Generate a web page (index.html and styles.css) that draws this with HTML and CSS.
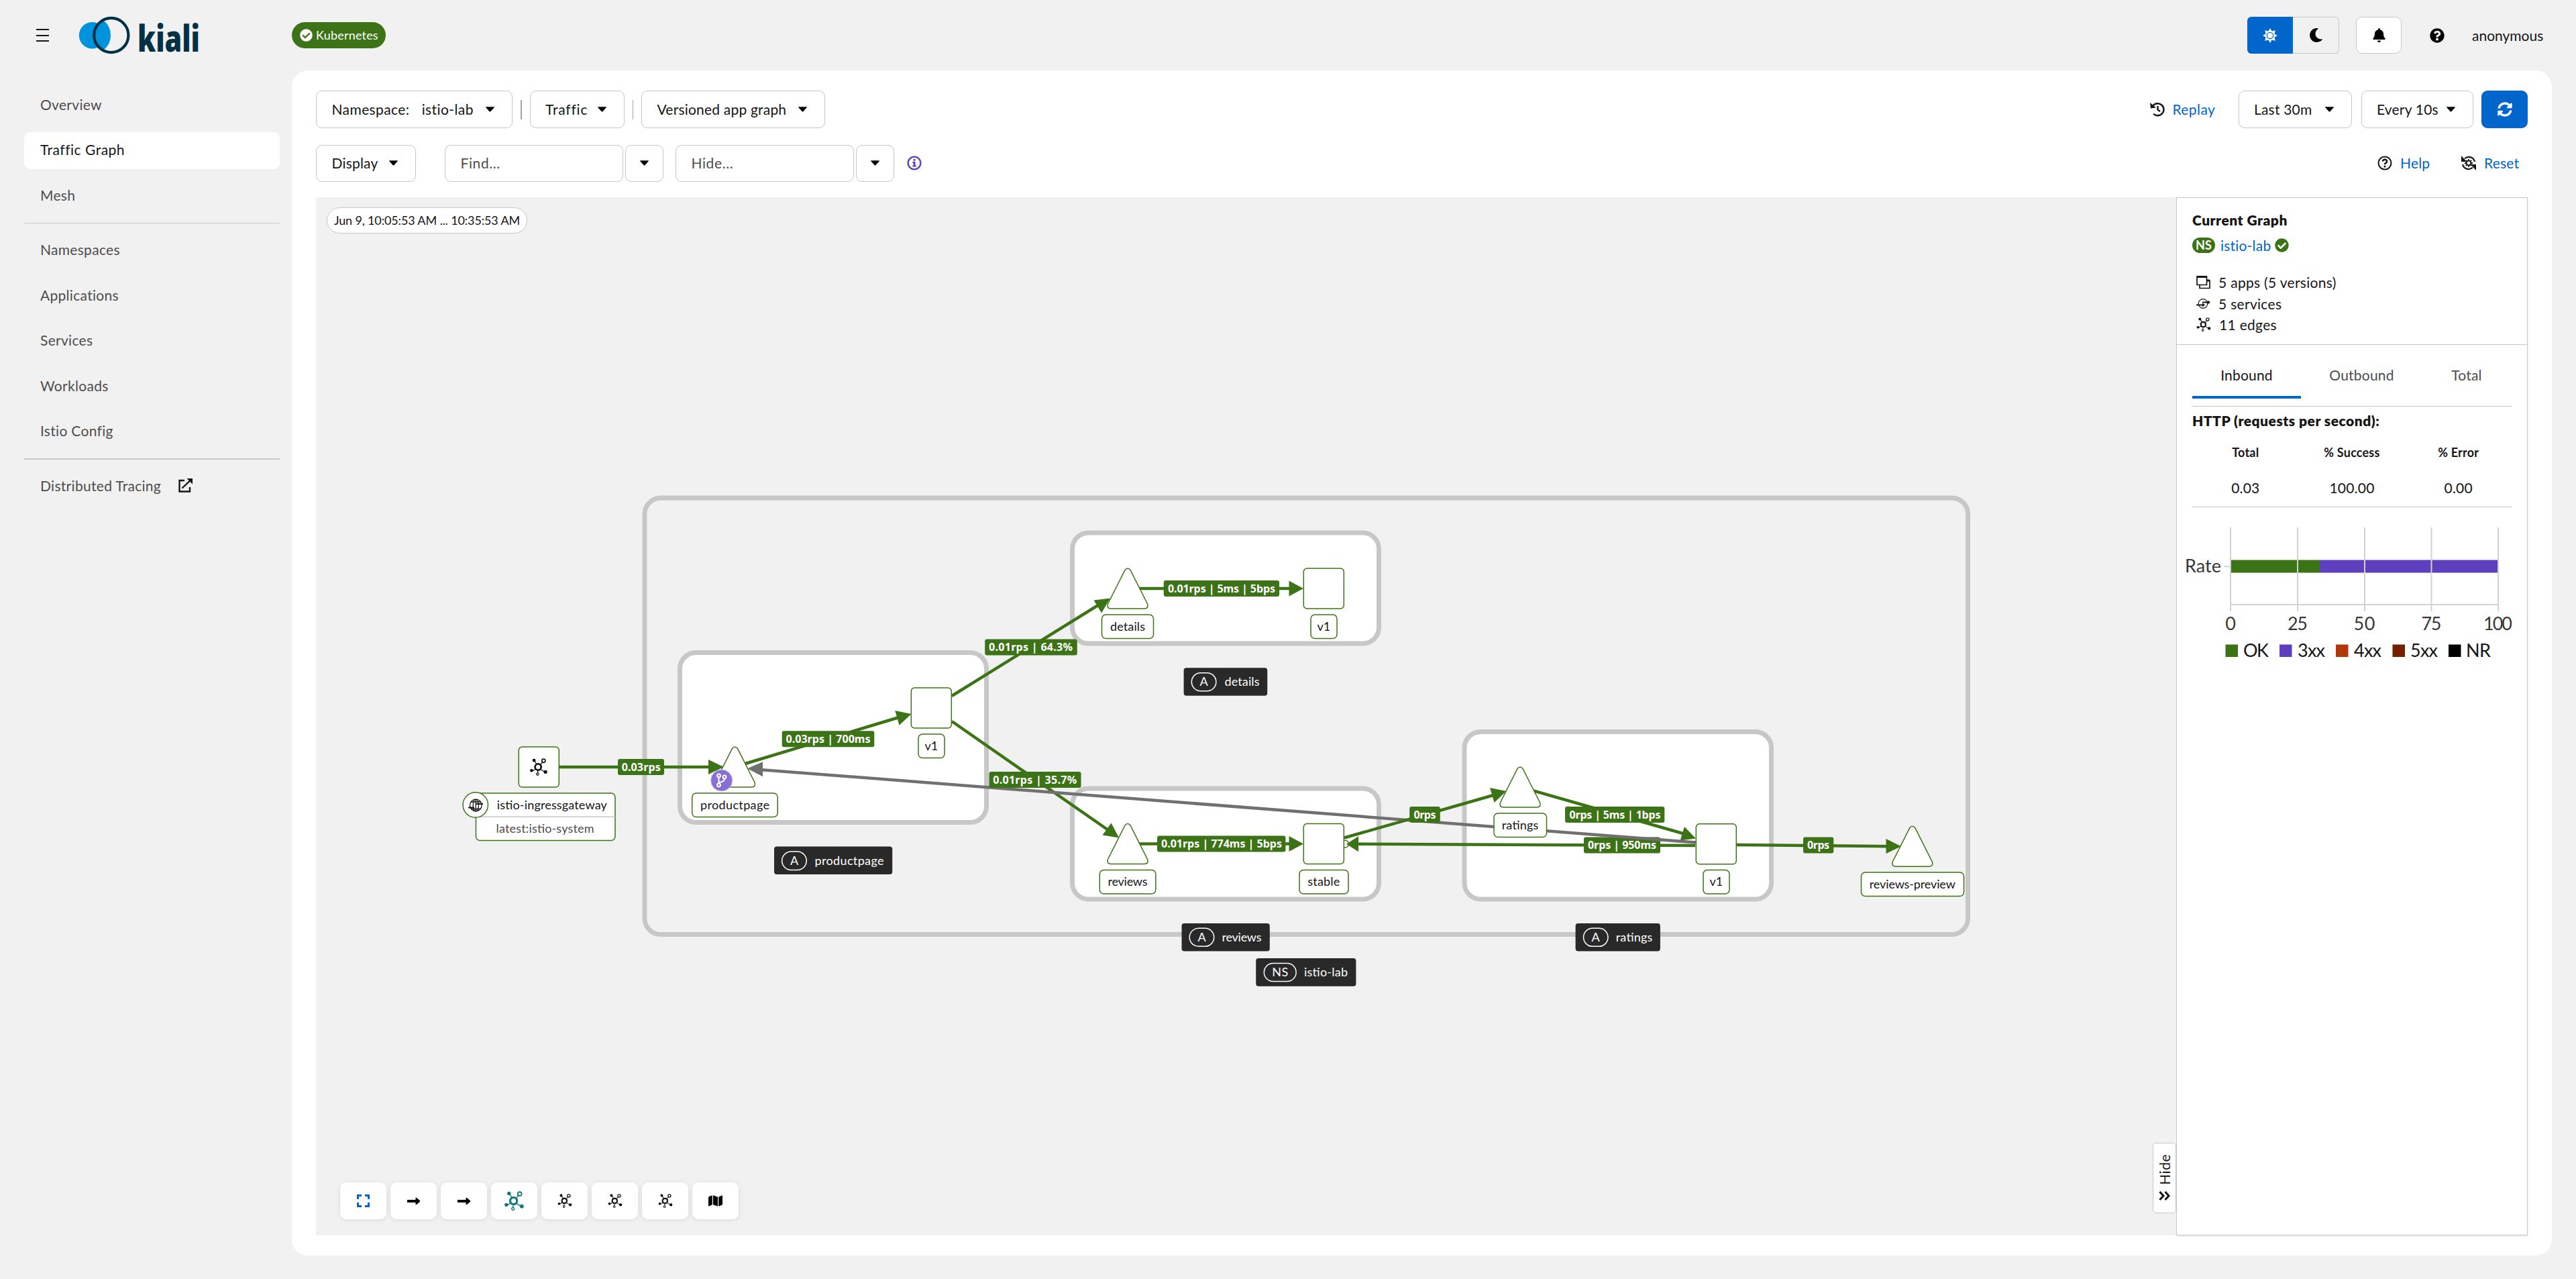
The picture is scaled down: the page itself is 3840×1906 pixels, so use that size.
FILE: index.html
```html
<!DOCTYPE html>
<html lang="en">
<head>
  <meta charset="UTF-8">
  <title>Kiali</title>
  <link rel="stylesheet" href="styles.css">
</head>
<body>
  <!-- shared icons -->
  <svg class="defs" width="0" height="0">
    <symbol id="caret" viewBox="0 0 14 8"><path d="M.6 0h12.8q.9.3.2 1L7.8 7.4q-.8.8-1.6 0L.4 1Q-.3.3.6 0z"/></symbol>
    <symbol id="check" viewBox="0 0 512 512"><path d="M504 256c0 136.967-111.033 248-248 248S8 392.967 8 256 119.033 8 256 8s248 111.033 248 248zM227.314 387.314l184-184c6.248-6.248 6.248-16.379 0-22.627l-22.627-22.627c-6.248-6.249-16.379-6.249-22.628 0L216 308.118l-70.059-70.059c-6.248-6.248-16.379-6.248-22.628 0l-22.627 22.627c-6.248 6.248-6.248 16.379 0 22.627l104 104c6.249 6.249 16.379 6.249 22.628.001z"/></symbol>
    <symbol id="topology" viewBox="0 0 32 32">
      <g stroke="currentColor" stroke-width="1.6" fill="none">
        <path d="M8 4l5 8M24 6l-6 7M5 23l6-4M19 20l8 5M15 21l-1 6"/>
        <circle cx="15" cy="16" r="5.6" stroke-width="3.4"/>
        <circle cx="25" cy="4.6" r="3.2" stroke-width="2"/>
        <circle cx="14" cy="29" r="2.1"/>
      </g>
      <circle cx="7.5" cy="3.8" r="3"/><circle cx="3" cy="22.5" r="2.8"/><circle cx="28.5" cy="25" r="3.2"/>
    </symbol>
  </svg>

  <header class="masthead">
    <div class="menu"><span></span><span></span><span></span></div>
    <svg class="logo" width="190" height="60" viewBox="0 0 190 60">
      <circle cx="21.500" cy="29.700" r="19.700" fill="#0093dd"/>
      <path d="M38 7Q49 16 49 29.500T38 52Q26 44 25 29.500Q26 15 38 7z" fill="#0093dd"/>
      <circle cx="49.800" cy="29.500" r="25.600" fill="none" stroke="#013144" stroke-width="4.200"/>
      <text class="logo-text" x="89" y="54" textLength="93" lengthAdjust="spacingAndGlyphs">kiali</text>
    </svg>
    <div class="cluster"><svg width="19" height="19"><use href="#check"/></svg><span>Kubernetes</span></div>
    <div class="tools">
      <div class="theme">
        <span class="theme-on"><svg width="22" height="22" viewBox="0 0 22 22"><path d="M11 0l2.6 4.600L18.800 3.200l-1.400 5.200L22 11l-4.600 2.600 1.400 5.200-5.200-1.400L11 22l-2.600-4.600-5.200 1.400 1.400-5.200L0 11l4.600-2.600-1.400-5.200 5.200 1.400z"/><circle cx="11" cy="11" r="4.700" fill="#fff" stroke="#06c" stroke-width="1.300"/></svg></span>
        <span class="theme-off"><svg width="21" height="21" viewBox="0 0 512 512"><path d="M283.211 512c78.962 0 151.079-35.925 198.857-94.792 7.068-8.708-.639-21.430-11.562-19.350-124.203 23.654-238.262-71.576-238.262-196.954 0-72.222 38.662-138.635 101.498-174.394 9.686-5.512 7.250-20.197-3.756-22.230A258.156 258.156 0 0 0 283.211 0c-141.309 0-256 114.511-256 256 0 141.309 114.511 256 256 256z"/></svg></span>
      </div>
      <div class="bell"><svg width="19" height="21" viewBox="0 0 448 512"><path d="M224 512c35.320 0 63.970-28.650 63.970-64H160.030c0 35.350 28.650 64 63.970 64zm215.390-149.710c-19.320-20.760-55.470-51.990-55.470-154.290 0-77.700-54.480-139.900-127.940-155.160V32c0-17.670-14.320-32-31.980-32s-31.980 14.330-31.980 32v20.840C118.560 68.100 64.080 130.300 64.080 208c0 102.300-36.150 133.530-55.470 154.290-6 6.450-8.660 14.160-8.610 21.710.110 16.400 12.980 32 32.100 32h383.800c19.120 0 32-15.600 32.100-32 .050-7.550-2.610-15.270-8.610-21.710z"/></svg></div>
      <svg class="help-dot" width="22" height="22" viewBox="0 0 512 512"><path d="M504 256c0 136.997-111.043 248-248 248S8 392.997 8 256C8 119.083 119.043 8 256 8s248 111.083 248 248zM262.655 90c-54.497 0-89.255 22.957-116.549 63.758-3.536 5.286-2.353 12.415 2.715 16.258l34.699 26.310c5.205 3.947 12.621 3.008 16.665-2.122 17.864-22.658 30.113-35.797 57.303-35.797 20.429 0 45.698 13.148 45.698 32.958 0 14.976-12.363 22.667-32.534 33.976C247.128 238.528 216 254.941 216 296v4c0 6.627 5.373 12 12 12h56c6.627 0 12-5.373 12-12v-1.333c0-28.462 83.186-29.647 83.186-106.667 0-58.002-60.165-102-116.531-102zM256 338c-25.365 0-46 20.635-46 46 0 25.364 20.635 46 46 46s46-20.636 46-46c0-25.365-20.635-46-46-46z"/></svg>
      <span class="user">anonymous</span>
    </div>
  </header>

  <div class="page">
    <nav class="sidebar">
      <a>Overview</a>
      <a class="active">Traffic Graph</a>
      <a>Mesh</a>
      <hr>
      <a>Namespaces</a>
      <a>Applications</a>
      <a>Services</a>
      <a>Workloads</a>
      <a>Istio Config</a>
      <hr>
      <a>Distributed Tracing
        <svg width="22" height="22" viewBox="0 0 22 22" fill="none" stroke="#151515" stroke-width="2.400"><path d="M10 3H2.500v16.500H18V13M6.500 14.500L18.500 3"/><path d="M13.500 0H22v8.500z" fill="#151515" stroke="none"/></svg>
      </a>
    </nav>

    <main class="content">
      <div class="toolbar">
        <div class="btn ns"><span>Namespace:</span><span>istio-lab</span><svg class="caret"><use href="#caret"/></svg></div>
        <i class="sep"></i>
        <div class="btn traffic"><span>Traffic</span><svg class="caret"><use href="#caret"/></svg></div>
        <i class="sep"></i>
        <div class="btn versioned"><span>Versioned app graph</span><svg class="caret"><use href="#caret"/></svg></div>
        <div class="right">
          <a class="link replay"><svg width="22" height="22" viewBox="0 0 22 22" fill="none" stroke="#151515" stroke-width="2.400"><path d="M4.500 5.500A9 9 0 1 1 5 17.500M11.500 6v5.500l3.500 2.500"/><path d="M0 1l1 8.500 8-1z" fill="#151515" stroke="none"/></svg>Replay</a>
          <div class="btn last"><span>Last 30m</span><svg class="caret"><use href="#caret"/></svg></div>
          <div class="btn every"><span>Every 10s</span><svg class="caret"><use href="#caret"/></svg></div>
          <div class="refresh"><svg width="22" height="22" viewBox="0 0 512 512"><path d="M370.720 133.280C339.458 104.008 298.888 87.962 255.848 88c-77.458.068-144.328 53.178-162.791 126.850-1.344 5.363-6.122 9.150-11.651 9.150H24.103c-7.498 0-13.194-6.807-11.807-14.176C33.933 94.924 134.813 8 256 8c66.448 0 126.791 26.136 171.315 68.685L463.030 40.970C478.149 25.851 504 36.559 504 57.941V192c0 13.255-10.745 24-24 24H345.941c-21.382 0-32.090-25.851-16.971-40.971l41.750-41.749zM32 296h134.059c21.382 0 32.090 25.851 16.971 40.971l-41.750 41.750c31.262 29.273 71.835 45.319 114.876 45.280 77.418-.070 144.315-53.144 162.787-126.849 1.344-5.363 6.122-9.150 11.651-9.150h57.304c7.498 0 13.194 6.807 11.807 14.176C478.067 417.076 377.187 504 256 504c-66.448 0-126.791-26.136-171.315-68.685L48.970 471.030C33.851 486.149 8 475.441 8 454.059V320c0-13.255 10.745-24 24-24z"/></svg></div>
        </div>
      </div>

      <div class="toolbar second">
        <div class="btn display"><span>Display</span><svg class="caret"><use href="#caret"/></svg></div>
        <div class="btn field find">Find...</div>
        <div class="btn drop"><svg class="caret"><use href="#caret"/></svg></div>
        <div class="btn field hide">Hide...</div>
        <div class="btn drop"><svg class="caret"><use href="#caret"/></svg></div>
        <svg class="info" width="22" height="22" viewBox="0 0 22 22"><circle cx="11" cy="11" r="9.400" fill="none" stroke="#5e40be" stroke-width="2.400"/><path fill="#5e40be" d="M9.500 5h3v2.800h-3zM8.300 9h4.200v5.500h1.300v2H8.300v-2h1.300V11H8.300z"/></svg>
        <div class="right">
          <a class="link help"><svg width="22" height="22" viewBox="0 0 22 22" fill="none" stroke="#151515"><circle cx="11" cy="11" r="9.500" stroke-width="2"/><path stroke-width="2.400" d="M7.600 8.500Q8.500 5.700 11.200 5.800q3 .2 3 2.800 0 1.400-1.700 2.300T11 13.200"/><circle cx="11" cy="16" r="1.600" fill="#151515" stroke="none"/></svg>Help</a>
          <a class="link reset"><svg width="22" height="22" viewBox="0 0 22 22" fill="none" stroke="#151515"><path stroke-width="2.200" d="M5 4.500A9 9 0 0 1 20 9M17 17.500A9 9 0 0 1 2 13"/><circle cx="11" cy="11" r="3.400" stroke-width="2"/><path stroke-width="1.800" d="M11 5v2M11 15v2M5 11h2M15 11h2M6.800 6.800l1.400 1.400M13.800 13.800l1.400 1.400M15.200 6.800l-1.400 1.400M8.200 13.800l-1.400 1.400"/><path d="M0 0v9h8zM22 22v-9h-8z" fill="#151515" stroke="none"/></svg>Reset</a>
        </div>
      </div>

      <div class="workspace">
        <div class="graph">
          <svg class="canvas" width="2773" height="1547" viewBox="471 294 2773 1547">
            <!-- namespace and app boxes -->
            <rect class="box outer" x="961" y="742" width="1972.500" height="650.500" rx="24"/>
            <rect class="box" x="1013.500" y="972.500" width="457" height="253" rx="24"/>
            <rect class="box" x="1598.500" y="794" width="457" height="165" rx="24"/>
            <rect class="box" x="1598.500" y="1175" width="457" height="165" rx="24"/>
            <rect class="box" x="2183" y="1090.500" width="457.500" height="249.500" rx="24"/>

            <!-- edges -->
            <g class="edge">
              <path d="M833 1143H1060"/><path class="tip" d="M1079 1143l-23-11v22z"/>
              <path d="M1111 1138L1340 1069"/><path class="tip" d="M1358.500 1064l-24.300-5 6.300 21.700z"/>
              <path d="M1419 1037L1640 900"/><path class="tip" d="M1655 891.500l-24.500 3 11.500 19z"/>
              <path d="M1419 1075L1652 1237"/><path class="tip" d="M1668 1248.500l-11.500-22-13 18z"/>
              <path d="M1698 877H1925"/><path class="tip" d="M1943 877l-21.500-11.500v23z"/>
              <path d="M1698 1257.500H1925"/><path class="tip" d="M1943 1257.500l-21.500-11.500v23z"/>
              <path d="M2527 1260L2022 1257.700"/>
              <path d="M2286 1178.500L2512 1243"/><path class="tip" d="M2528 1249.500l-17-17.500-6.300 20.500z"/>
              <path d="M2589 1259L2815 1261.200"/><path class="tip" d="M2834 1261.300l-22.500-11.300v22z"/>
            </g>
            <g class="tag"><rect x="2361" y="1247.500" width="114" height="24" rx="3"/><text x="2418" y="1265" textLength="102">0rps | 950ms</text></g>
            <path class="edge-idle" d="M1130 1146.700L2528 1255.500"/>
            <path class="tip-idle" d="M1114 1145.300l23-10v22z"/>
            <g class="edge">
              <path d="M2004 1248.500L2228 1184.500"/><path class="tip" d="M2245.500 1179l-24.500-5 6.500 22z"/>
              <circle class="port" cx="2005" cy="1257.700" r="5.500"/>
              <path class="tip" d="M2007 1257.700l18-11.500v23z"/>
            </g>

            <!-- edge labels -->
            <g class="tag"><rect x="921" y="1131" width="69" height="24" rx="3"/><text x="955.700" y="1148.700" textLength="58">0.03rps</text></g>
            <g class="tag"><rect x="1165.700" y="1089.300" width="137.600" height="24" rx="3"/><text x="1234.500" y="1107" textLength="126">0.03rps | 700ms</text></g>
            <g class="tag"><rect x="1468.200" y="952.500" width="137.500" height="24" rx="3"/><text x="1536.500" y="970.200" textLength="125">0.01rps | 64.3%</text></g>
            <g class="tag"><rect x="1734.700" y="865" width="172.300" height="24" rx="3"/><text x="1821" y="882.700" textLength="160">0.01rps | 5ms | 5bps</text></g>
            <g class="tag"><rect x="1474.500" y="1150" width="137" height="24" rx="3"/><text x="1542.700" y="1167.700" textLength="125">0.01rps | 35.7%</text></g>
            <g class="tag"><rect x="1725" y="1245.500" width="191.400" height="24" rx="3"/><text x="1821" y="1263.200" textLength="180">0.01rps | 774ms | 5bps</text></g>
            <g class="tag"><rect x="2101.200" y="1202" width="45.600" height="24" rx="3"/><text x="2124" y="1219.700" textLength="33">0rps</text></g>
            <g class="tag"><rect x="2333" y="1202" width="148.300" height="24" rx="3"/><text x="2407.500" y="1219.700" textLength="136">0rps | 5ms | 1bps</text></g>
            <g class="tag"><rect x="2688" y="1247.500" width="45.300" height="24" rx="3"/><text x="2710.600" y="1265.200" textLength="33">0rps</text></g>

            <!-- nodes -->
            <g class="node">
              <rect x="773.300" y="1113" width="60" height="60" rx="5"/>
              <rect x="1358.300" y="1025" width="60" height="60" rx="5"/>
              <rect x="1943.300" y="847" width="60" height="60" rx="5"/>
              <rect x="1943.300" y="1227.500" width="60" height="60" rx="5"/>
              <rect x="2528.300" y="1227.700" width="60" height="60" rx="5"/>
              <path id="tri" d="M1091.500 1115.500Q1095.500 1110.500 1099.500 1115.500L1125 1166Q1127 1173 1120.500 1173H1070.500Q1064 1173 1066 1166z"/>
              <use href="#tri" x="585.500" y="-266"/>
              <use href="#tri" x="585.500" y="114.500"/>
              <use href="#tri" x="1170.500" y="30"/>
              <use href="#tri" x="1755.300" y="118.200"/>
            </g>
            <use href="#topology" x="789" y="1130" width="28" height="26"/>

            <!-- node labels -->
            <g class="label">
              <rect x="709.500" y="1182" width="207.500" height="70.500" rx="6"/>
              <path class="rule" d="M710 1217.300H917"/>
              <text x="822.800" y="1205.700" textLength="164">istio-ingressgateway</text>
              <text class="muted" x="812.500" y="1240.700" textLength="146">latest:istio-system</text>
              <circle cx="708.800" cy="1199.500" r="18.700"/>
              <rect x="1031.700" y="1182" width="127.500" height="35.500" rx="6"/><text x="1095.500" y="1205.700" textLength="103">productpage</text>
              <rect x="1369" y="1094" width="39" height="35.500" rx="6"/><text x="1388.300" y="1117.700">v1</text>
              <rect x="1642.500" y="916" width="77" height="35.500" rx="6"/><text x="1681" y="939.700" textLength="52">details</text>
              <rect x="1954" y="916" width="39" height="35.500" rx="6"/><text x="1973.300" y="939.700">v1</text>
              <rect x="1639.300" y="1296.500" width="83.500" height="35.500" rx="6"/><text x="1681" y="1320" textLength="59">reviews</text>
              <rect x="1937" y="1296.500" width="73" height="35.500" rx="6"/><text x="1973.300" y="1320" textLength="48">stable</text>
              <rect x="2227" y="1212" width="78.500" height="35.500" rx="6"/><text x="2266" y="1235.700" textLength="54.500">ratings</text>
              <rect x="2539" y="1296.500" width="39" height="35.500" rx="6"/><text x="2558.400" y="1320">v1</text>
              <rect x="2774.500" y="1300" width="153" height="35.500" rx="6"/><text x="2850.800" y="1323.700" textLength="128">reviews-preview</text>
            </g>
            <!-- gateway globe -->
            <g fill="none" stroke="#151515" stroke-width="1.300">
              <circle cx="709.300" cy="1200" r="8.800"/><ellipse cx="709.300" cy="1200" rx="4.200" ry="8.800"/><path d="M709.300 1191v18M702 1195h15M702 1205.500h15"/>
              <path stroke-width="2.200" d="M710 1198h10M698 1203.500h9"/>
            </g>
            <!-- virtual service badge -->
            <circle cx="1075.700" cy="1163" r="16" fill="#876fd4" stroke="#c6b9ee"/>
            <g fill="none" stroke="#fff" stroke-width="2"><path d="M1071.500 1158.500v9M1071.500 1166q8.500-.500 8.500-6"/><circle cx="1071.500" cy="1156" r="2.400"/><circle cx="1071.500" cy="1170" r="2.400"/><circle cx="1080" cy="1158" r="2.400"/></g>

            <!-- group labels -->
            <g class="group"><rect x="1154" y="1261.500" width="176.200" height="41.500" rx="4"/><rect class="pill" x="1165.700" y="1269" width="36.500" height="27.500" rx="13.700"/><text x="1184" y="1288.700">A</text><text x="1266" y="1289" textLength="103">productpage</text></g>
            <g class="group"><rect x="1764.600" y="995.300" width="124.600" height="41.500" rx="4"/><rect class="pill" x="1776.300" y="1002.700" width="36.500" height="27" rx="13.500"/><text x="1794.600" y="1022.300">A</text><text x="1851.500" y="1022.300" textLength="52">details</text></g>
            <g class="group"><rect x="1761.500" y="1376" width="131.300" height="41.500" rx="4"/><rect class="pill" x="1773.200" y="1383.300" width="36.500" height="27" rx="13.500"/><text x="1791.500" y="1403">A</text><text x="1851" y="1403" textLength="59">reviews</text></g>
            <g class="group"><rect x="1872.200" y="1428" width="149.200" height="41.700" rx="4"/><rect class="pill" x="1884.300" y="1435.500" width="47.800" height="27" rx="13.500"/><text x="1908.200" y="1455.300" textLength="24">NS</text><text x="1976.500" y="1455.300" textLength="65">istio-lab</text></g>
            <g class="group"><rect x="2348.600" y="1376" width="126.300" height="41.500" rx="4"/><rect class="pill" x="2360.500" y="1383.300" width="36.500" height="27" rx="13.500"/><text x="2378.700" y="1403">A</text><text x="2436" y="1403" textLength="54.500">ratings</text></g>
          </svg>

          <div class="time">Jun 9, 10:05:53 AM ... 10:35:53 AM</div>

          <div class="controls">
            <span><svg width="19" height="19" viewBox="0 0 19 19" fill="none" stroke="#06c" stroke-width="3"><path d="M1.500 7V1.500H7M12 1.500h5.500V7M17.500 12v5.500H12M7 17.500H1.500V12"/></svg></span>
            <span><svg width="20" height="12" viewBox="0 0 20 12"><path d="M0 4h12.500V1.500Q13 .3 14 1l5 4.200q.800.800 0 1.600L14 11q-1 .700-1.500-.500V8H0z"/></svg></span>
            <span><svg width="20" height="12" viewBox="0 0 20 12"><path d="M0 4h12.500V1.500Q13 .3 14 1l5 4.200q.800.800 0 1.600L14 11q-1 .700-1.500-.500V8H0z"/></svg></span>
            <span class="chosen"><svg width="31" height="29"><use href="#topology"/></svg></span>
            <span><svg width="22" height="21"><use href="#topology"/></svg></span>
            <span><svg width="22" height="21"><use href="#topology"/></svg></span>
            <span><svg width="22" height="21"><use href="#topology"/></svg></span>
            <span><svg width="21" height="19" viewBox="0 0 576 512"><path d="M0 117.660v346.320c0 11.320 11.430 19.060 21.940 14.860L160 416V32L20.120 87.950A32.006 32.006 0 0 0 0 117.660zM192 416l192 64V96L192 32v384zM554.060 33.160L416 96v384l139.880-55.950A31.996 31.996 0 0 0 576 394.340V48.020c0-11.320-11.430-19.060-21.940-14.860z"/></svg></span>
          </div>

          <div class="hide-tab">
            <span>Hide</span>
            <svg width="18" height="14" viewBox="0 0 18 14" fill="none" stroke="#151515" stroke-width="3"><path d="M1.500 1l5.500 6-5.500 6M9.500 1l5.500 6-5.500 6"/></svg>
          </div>
        </div>

        <aside class="summary">
          <div class="summary-head">
            <strong>Current Graph</strong>
            <div class="ns-line"><b class="ns-badge">NS</b><a>istio-lab</a><svg width="21" height="21" fill="#3d7317"><use href="#check"/></svg></div>
            <ul>
              <li><svg width="21" height="21" viewBox="0 0 21 21" fill="none" stroke="#151515" stroke-width="1.700"><path d="M1 2h14.500v12.500H1zM5 14.500v5h15V8h-4.500"/><path stroke-width="3" d="M1 2.500h14.500M16 8h4"/></svg>5 apps (5 versions)</li>
              <li><svg width="21" height="17" viewBox="0 0 21 17" fill="none" stroke="#151515"><circle cx="10" cy="8.500" r="6.800" stroke-width="1.200"/><path stroke-width="2" d="M9 6.500h9M0 10.500h10"/><path d="M17 3.500l4 3-4 3zM9 7.500l4 3-4 3z" fill="#151515" stroke="none"/></svg>5 services</li>
              <li><svg width="22" height="21"><use href="#topology"/></svg>11 edges</li>
            </ul>
          </div>
          <div class="tabs"><span class="current">Inbound</span><span>Outbound</span><span>Total</span></div>
          <div class="rates">
            <strong>HTTP (requests per second):</strong>
            <table>
              <tr><th>Total</th><th>% Success</th><th>% Error</th></tr>
              <tr><td>0.03</td><td>100.00</td><td>0.00</td></tr>
            </table>
          </div>
          <svg class="chart" width="521" height="240" viewBox="3245 760 521 240">
            <rect x="3325" y="834.500" width="133" height="19" fill="#3d7317"/>
            <rect x="3458" y="834.500" width="266" height="19" fill="#5e40be"/>
            <g class="grid">
              <path d="M3325 786v125M3425 786v125M3525 786v125M3624.500 786v125M3724 786v125"/>
              <path d="M3325 901h399M3315.500 844.300h9.500"/>
            </g>
            <g class="axis">
              <text x="3284" y="853" textLength="54">Rate</text>
              <text x="3325" y="939">0</text>
              <text x="3425" y="939" textLength="30">25</text>
              <text x="3524.500" y="939" textLength="32">50</text>
              <text x="3624.500" y="939" textLength="30">75</text>
              <text x="3723.500" y="939" textLength="43">100</text>
            </g>
            <g class="legend">
              <rect x="3317.500" y="960.500" width="18.500" height="18.500" fill="#3d7317"/><text x="3344" y="979" textLength="38">OK</text>
              <rect x="3398" y="960.500" width="18.500" height="18.500" fill="#5e40be"/><text x="3425" y="979" textLength="41">3xx</text>
              <rect x="3482" y="960.500" width="18.500" height="18.500" fill="#b1380b"/><text x="3509" y="979" textLength="41">4xx</text>
              <rect x="3566.500" y="960.500" width="18.500" height="18.500" fill="#731f00"/><text x="3593" y="979" textLength="41">5xx</text>
              <rect x="3650" y="960.500" width="18.500" height="18.500" fill="#000"/><text x="3676" y="979" textLength="37">NR</text>
            </g>
          </svg>
        </aside>
      </div>
    </main>
  </div>
</body>
</html>
```

FILE: styles.css
```css
* {
  box-sizing: border-box;
}

body {
  margin: 0;
  height: 1906px;
  background-color: #f1f1f1;
  color: #151515;
  font-family: Lato, "Open Sans", sans-serif;
  font-size: 21px;
  line-height: 31.5px;
  letter-spacing: 0.2px;
  overflow: hidden;
}

svg {
  display: block;
  flex: none;
  letter-spacing: 0;
}

.defs {
  position: absolute;
}

.masthead {
  display: flex;
  align-items: center;
  height: 105px;
  padding: 0 48px 0 54px;
}

.menu {
  display: flex;
  flex-direction: column;
  gap: 6.5px;
  width: 19px;
  margin-right: 43px;
}

.menu span {
  height: 2px;
  background-color: #151515;
}

.logo {
  overflow: visible;
}

.logo-text {
  font-family: "Open Sans", sans-serif;
  font-weight: 800;
  font-size: 54px;
  fill: #013144;
}

.cluster {
  display: flex;
  align-items: center;
  gap: 5px;
  width: 140px;
  height: 39px;
  margin-left: 129px;
  padding-left: 12px;
  border-radius: 20px;
  background-color: #3d7317;
  color: #fff;
  fill: #fff;
  font-size: 18px;
}

.tools {
  display: flex;
  align-items: center;
  margin-left: auto;
}

.theme {
  display: flex;
  width: 137px;
  height: 55px;
}

.theme span {
  display: flex;
  align-items: center;
  justify-content: center;
  flex: 1;
}

.theme-on {
  background-color: #06c;
  fill: #fff;
  border-radius: 6px 0 0 6px;
}

.theme-off {
  border: 1.5px solid #c7c7c7;
  border-left: none;
  border-radius: 0 6px 6px 0;
}

.bell {
  display: flex;
  align-items: center;
  justify-content: center;
  width: 68px;
  height: 55px;
  margin: 0 42px 0 25px;
  background-color: #fff;
  border: 1.5px solid #c7c7c7;
  border-radius: 9px;
}

.help-dot {
  margin-right: 41px;
}

.user {
  width: 107px;
  letter-spacing: 0;
}

.page {
  display: flex;
}

.sidebar {
  display: flex;
  flex-direction: column;
  gap: 12.5px;
  width: 435px;
  padding: 24px 18px 0 36px;
}

.sidebar a {
  display: flex;
  align-items: center;
  gap: 25px;
  height: 55px;
  padding: 0 0 2px 24px;
  border-radius: 9px;
  color: #4d4d4d;
  letter-spacing: 0.3px;
}

.sidebar .active {
  background-color: #fff;
  color: #151515;
  letter-spacing: 0.5px;
}

.sidebar hr {
  width: 100%;
  height: 1.5px;
  margin: 0;
  border: none;
  background-color: #c7c7c7;
}

.content {
  width: 3369px;
  height: 1766px;
  padding: 30px 36px;
  background-color: #fff;
  border-radius: 24px;
}

.toolbar {
  display: flex;
  align-items: center;
  height: 56px;
}

.second {
  margin-top: 24px;
}

.btn {
  display: flex;
  align-items: center;
  justify-content: space-between;
  height: 56px;
  padding: 0 26px 1px 22.5px;
  border: 1.5px solid #c7c7c7;
  border-radius: 9px;
}

.second .btn {
  height: 55px;
}

.caret {
  width: 13px;
  height: 8px;
}

.ns {
  width: 293px;
  letter-spacing: 0.4px;
}

.traffic {
  width: 141px;
  letter-spacing: 0.8px;
}

.versioned {
  width: 274px;
}

.display {
  width: 149px;
}

.find {
  width: 266px;
  margin: 0 3px 0 43px;
}

.hide {
  width: 266px;
  margin: 0 3px 0 18px;
}

.last {
  width: 169px;
  margin-right: 14px;
}

.every {
  width: 167px;
  margin-right: 12.5px;
}

.field {
  color: #4d4d4d;
  letter-spacing: 0.6px;
}

.drop {
  width: 57px;
  padding: 0;
  justify-content: center;
}

.sep {
  width: 1.5px;
  height: 29px;
  margin: 0 12px;
  background-color: #a3a3a3;
}

.info {
  margin-left: 19px;
}

.right {
  display: flex;
  align-items: center;
  margin-left: auto;
}

.link {
  display: flex;
  align-items: center;
  gap: 12px;
  padding-bottom: 1px;
  color: #06c;
}

.replay {
  width: 132px;
  letter-spacing: 0.4px;
}

.help {
  width: 125px;
}

.reset {
  width: 99px;
}

.refresh {
  display: flex;
  align-items: center;
  justify-content: center;
  width: 69px;
  height: 56px;
  background-color: #06c;
  border-radius: 9px;
  fill: #fff;
}

.workspace {
  display: flex;
  height: 1547px;
  margin-top: 23px;
}

/* graph */
.graph {
  position: relative;
  width: 2773px;
  background-color: #f1f1f1;
}

.time {
  position: absolute;
  left: 16px;
  top: 15px;
  width: 299px;
  height: 39px;
  background-color: #fff;
  border: 1.5px solid #c7c7c7;
  border-radius: 20px;
  text-align: center;
  font-size: 18px;
  letter-spacing: -0.15px;
  line-height: 36px;
}

.box {
  fill: #fff;
  stroke: #c7c7c7;
  stroke-width: 7;
}

.outer {
  fill: none;
}

.edge {
  stroke: #3d7317;
  stroke-width: 4.5;
}

.edge .tip {
  fill: #3d7317;
  stroke: none;
}

.edge .port {
  fill: #fff;
  stroke-width: 1.5;
}

.edge-idle {
  stroke: #707070;
  stroke-width: 4.5;
}

.tip-idle {
  fill: #707070;
}

.tag rect {
  fill: #3d7317;
}

.tag text {
  fill: #fff;
  font-family: "Noto Sans", sans-serif;
  font-weight: 700;
  font-size: 16px;
  text-anchor: middle;
}

.node,
.label rect,
.label circle {
  fill: #fff;
  stroke: #3d7317;
  stroke-width: 1.5;
}

.label text,
.group text {
  font-size: 18px;
  text-anchor: middle;
  fill: #151515;
}

.label .muted {
  fill: #4d4d4d;
}

.label .rule {
  stroke: #c7c7c7;
  stroke-width: 1.5;
}

.group rect {
  fill: #292929;
}

.group .pill {
  stroke: #fff;
  stroke-width: 1.5;
}

.group text {
  fill: #fff;
}

.controls {
  position: absolute;
  left: 36px;
  bottom: 24px;
  display: flex;
  gap: 6px;
}

.controls span {
  display: flex;
  align-items: center;
  justify-content: center;
  width: 69px;
  height: 55px;
  background-color: #fff;
  border-radius: 9px;
  box-shadow: 0 1px 6px rgba(0, 0, 0, 0.1);
}

.controls .chosen {
  color: #147878;
  fill: #147878;
}

.hide-tab {
  position: absolute;
  right: 0;
  bottom: 33px;
  display: flex;
  flex-direction: column;
  align-items: center;
  gap: 9px;
  width: 35px;
  height: 105px;
  padding-top: 16px;
  background-color: #fff;
  border: 1.5px solid #c7c7c7;
  border-radius: 5px;
}

.hide-tab span {
  writing-mode: vertical-rl;
  transform: rotate(180deg);
  letter-spacing: 0.5px;
}

/* summary panel */
.summary {
  width: 524px;
  border: 1.5px solid #c7c7c7;
  box-shadow: 0 1px 3px rgba(0, 0, 0, 0.12);
}

.summary strong {
  display: block;
  font-weight: 800;
  letter-spacing: 0.5px;
}

.summary-head {
  height: 218.5px;
  padding: 17px 23px 0;
  border-bottom: 1.5px solid #c7c7c7;
}

.ns-line {
  display: flex;
  align-items: center;
  margin-top: 6px;
}

.ns-line a {
  margin: 0 6px 0 8px;
}

.ns-line a {
  color: #06c;
}

.ns-badge {
  width: 34px;
  height: 23px;
  background-color: #3d7317;
  color: #fff;
  border-radius: 12px;
  font-size: 18px;
  line-height: 22px;
  text-align: center;
}

.summary ul {
  margin: 24px 0 0;
  padding: 0 0 0 6px;
  list-style: none;
}

.summary li {
  display: flex;
  align-items: center;
  gap: 12px;
  letter-spacing: 0.3px;
}

.tabs {
  display: flex;
  height: 92px;
  margin: 0 23px;
  padding-top: 18px;
  border-bottom: 1.5px solid #c7c7c7;
}

.tabs span {
  height: 62px;
  padding-top: 11px;
  color: #4d4d4d;
  text-align: center;
  width: 181px;
}

.tabs span:last-child {
  width: 132px;
}

.tabs .current {
  width: 162px;
  color: #151515;
  border-bottom: 4px solid #06c;
}

.rates {
  margin: 0 23px;
  padding-top: 5px;
  height: 150px;
  border-bottom: 1.5px solid #c7c7c7;
}

.rates table {
  width: 100%;
  margin-top: 5px;
  table-layout: fixed;
  border-collapse: collapse;
  text-align: center;
}

.rates th {
  height: 55px;
  padding: 0;
  font-size: 18px;
  font-weight: 700;
}

.rates td {
  height: 50px;
  padding: 0;
}

.chart {
  margin-top: 4px;
}

.grid {
  fill: none;
  stroke: #d2d2d2;
  stroke-width: 2;
}

.axis text,
.legend text {
  font-size: 27px;
  fill: #383838;
}

.axis text {
  text-anchor: middle;
}

.legend text {
  fill: #151515;
}
```
